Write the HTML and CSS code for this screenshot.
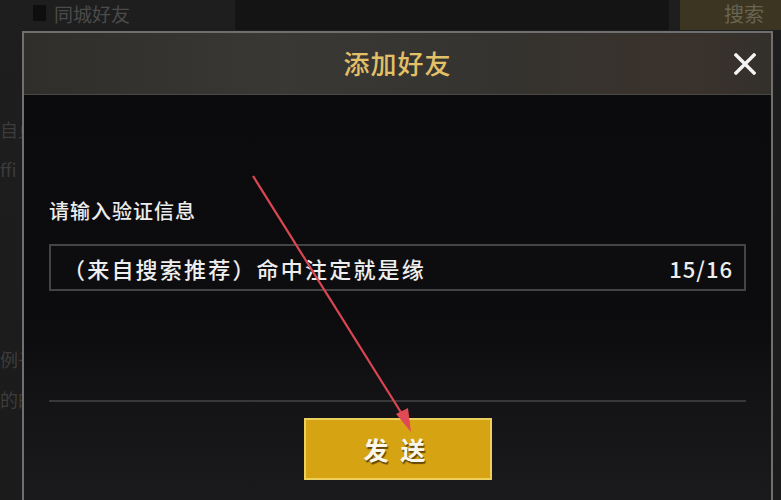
FILE: index.html
```html
<!DOCTYPE html>
<html lang="zh">
<head>
<meta charset="utf-8">
<title>添加好友</title>
<link rel="stylesheet" href="styles.css">
</head>
<body>
<div class="page">
  <div class="bg-top">
    <div class="bg-filter">
      <span class="bg-check"></span>
      <span class="bg-label">同城好友</span>
    </div>
    <div class="bg-search"></div>
    <div class="bg-btn">搜索</div>
  </div>
  <div class="bg-list">
    <div class="bg-row r1">自贞</div>
    <div class="bg-row r2">ffi</div>
    <div class="bg-row r3">例子</div>
    <div class="bg-row r4">的的</div>
  </div>

  <div class="dialog">
    <div class="dialog-header">
      <div class="dialog-title">添加好友</div>
      <button class="close" aria-label="关闭">
        <svg width="22" height="22" viewBox="0 0 22 22"><path d="M2 2 L20 20 M20 2 L2 20" stroke="#f4f4f4" stroke-width="3.4" stroke-linecap="square" fill="none"/></svg>
      </button>
    </div>
    <div class="dialog-body">
      <div class="field-label">请输入验证信息</div>
      <div class="field">
        <span class="field-text">（来自搜索推荐）命中注定就是缘</span>
        <span class="field-count">15/16</span>
      </div>
      <div class="divider"></div>
      <div class="actions">
        <button class="send">发送</button>
      </div>
    </div>
  </div>

  <svg class="arrow" width="781" height="500" viewBox="0 0 781 500">
    <line x1="253" y1="176" x2="402" y2="414" stroke="#dc4652" stroke-width="2.2"/>
    <polygon points="411,432 396,414 408,408" fill="#e04a55"/>
  </svg>
</div>
</body>
</html>
```

FILE: styles.css
```css
* { box-sizing: border-box; }
html, body { margin: 0; padding: 0; }
body {
  background: #1c1c1c;
  font-family: "Noto Sans CJK SC", "Noto Sans", sans-serif;
}
.page {
  position: relative;
  width: 781px;
  height: 500px;
  overflow: hidden;
  background: linear-gradient(#1e1e1e, #1b1b1b);
}
.bg-top {
  display: flex;
  height: 30px;
  align-items: stretch;
}
.bg-filter {
  display: flex;
  align-items: center;
  gap: 8px;
  width: 235px;
  padding-left: 33px;
  padding-bottom: 4px;
}
.bg-check {
  width: 13px;
  height: 16px;
  background: #0e0e0e;
}
.bg-label {
  color: #4b4b4b;
  font-size: 19px;
}
.bg-search {
  width: 434px;
  background: #141414;
}
.bg-btn {
  margin-left: 11px;
  flex: 1;
  background: #3b3521;
  color: #6a6451;
  font-size: 20px;
  padding-left: 44px;
  line-height: 28px;
}
.bg-list {
  display: flex;
  flex-direction: column;
  padding-left: 0;
  color: #3c3c3c;
  font-size: 18px;
}
.bg-row.r1 { margin-top: 86px; }
.bg-row.r2 { margin-top: 14px; }
.bg-row.r3 { margin-top: 164px; }
.bg-row.r4 { margin-top: 14px; }

.dialog {
  position: absolute;
  left: 22px;
  top: 31px;
  width: 751px;
  height: 480px;
  border: 2px solid #6f6f6f;
  border-bottom: none;
  display: flex;
  flex-direction: column;
  background: #0c0c0e;
}
.dialog-header {
  position: relative;
  height: 62px;
  display: flex;
  align-items: center;
  justify-content: center;
  background: linear-gradient(90deg, #2f2e2b 0%, #3a3834 35%, #35332f 65%, #3a322c 90%, #33302c 100%);
  border-bottom: 1px solid #4a4844;
}
.dialog-title {
  color: #e2c067;
  font-size: 26px;
  font-weight: 500;
  letter-spacing: 1px;
  padding-bottom: 2px;
}
.close {
  position: absolute;
  right: 15px;
  top: 20px;
  width: 22px;
  height: 22px;
  padding: 0;
  border: none;
  background: none;
  display: flex;
}
.dialog-body {
  flex: 1;
  display: flex;
  flex-direction: column;
  padding: 0 25px 0 25px;
  background: linear-gradient(#0b0b0d 0%, #0c0c0e 55%, #141416 75%, #1b1b1d 100%);
}
.field-label {
  margin-top: 104px;
  color: #ececec;
  font-size: 20px;
  font-weight: 500;
  letter-spacing: 1px;
  line-height: 24px;
}
.field {
  margin-top: 21px;
  height: 47px;
  border: 2px solid #444446;
  display: flex;
  align-items: center;
  justify-content: space-between;
  padding: 0 11px 0 12px;
  background: #0d0d10;
}
.field-text {
  color: #eeeeee;
  font-size: 22px;
  font-weight: 500;
  letter-spacing: 2.2px;
}
.field-count {
  color: #eeeeee;
  font-size: 22px;
  font-weight: 500;
  letter-spacing: 1px;
}
.divider {
  margin-top: 109px;
  height: 2px;
  background: #38383a;
}
.actions {
  display: flex;
  justify-content: center;
  margin-top: 16px;
}
.send {
  width: 188px;
  height: 62px;
  background: #d6a413;
  border: 2px solid #edcf5e;
  color: #fbf7ea;
  font-family: "Noto Sans CJK SC", sans-serif;
  font-size: 25px;
  font-weight: bold;
  letter-spacing: 12px;
  padding-left: 12px;
  text-shadow: 1px 2px 1px rgba(60, 40, 0, 0.75);
}
.arrow {
  position: absolute;
  left: 0;
  top: 0;
  pointer-events: none;
}
```
